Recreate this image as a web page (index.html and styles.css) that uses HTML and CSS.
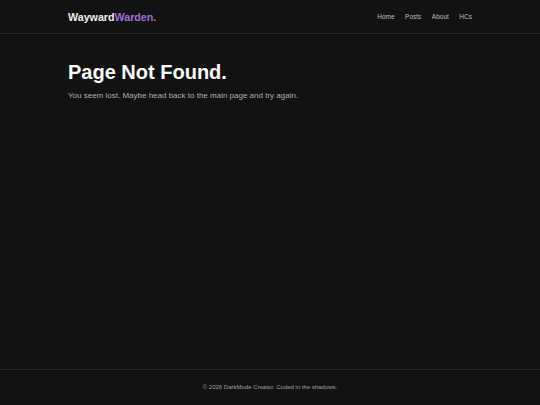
FILE: index.html
```html
<!DOCTYPE html>
<html lang="en">
<head>
<meta charset="utf-8">
<title>Page Not Found</title>
<link rel="stylesheet" href="styles.css">
</head>
<body>
<header class="site-header">
  <div class="container header-inner">
    <a class="logo" href="#">Wayward<span class="accent">Warden.</span></a>
    <nav class="nav">
      <a href="#">Home</a>
      <a href="#">Posts</a>
      <a href="#">About</a>
      <a href="#">HCs</a>
    </nav>
  </div>
</header>
<main class="main">
  <div class="container">
    <h1 class="title">Page Not Found.</h1>
    <p class="lead">You seem lost. Maybe head back to the main page and try again.</p>
  </div>
</main>
<footer class="site-footer">
  <p>© 2026 DarkMode Creator. Coded in the shadows.</p>
</footer>
</body>
</html>
```
FILE: styles.css
```css
* { box-sizing: border-box; }
html, body { margin: 0; padding: 0; }
body {
  background: #121212;
  color: #e0e0e0;
  font-family: "Liberation Sans", Arial, sans-serif;
  min-height: 100vh;
  display: flex;
  flex-direction: column;
}
a { text-decoration: none; color: inherit; }
.container {
  width: 404px;
  margin: 0 auto;
}
.site-header {
  border-bottom: 1px solid #2a2a2a;
}
.header-inner {
  height: 33px;
  display: flex;
  align-items: center;
  justify-content: space-between;
}
.logo {
  font-weight: bold;
  font-size: 10.7px;
  color: #f0f0f0;
}
.accent { color: #a070d8; }
.nav {
  display: flex;
  gap: 10.5px;
  font-size: 6.5px;
}
.nav a { color: #bdbdbd; }
.main {
  flex: 1;
  padding-top: 26px;
}
.title {
  margin: 0;
  font-size: 20px;
  font-weight: bold;
  color: #ffffff;
  line-height: 1.2;
}
.lead {
  margin: 7px 0 0;
  font-size: 8px;
  color: #b0b0b0;
}
.site-footer {
  border-top: 1px solid #2a2a2a;
  padding: 13px 0 14px;
  text-align: center;
}
.site-footer p {
  margin: 0;
  font-size: 6px;
  color: #a0a0a0;
  line-height: 8px;
}
```
